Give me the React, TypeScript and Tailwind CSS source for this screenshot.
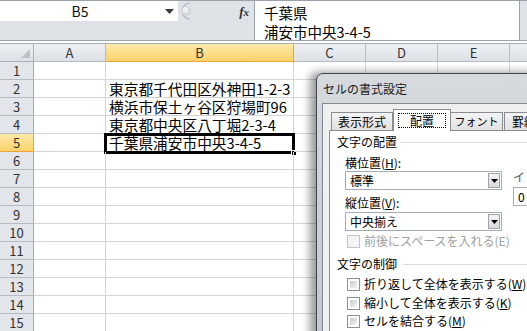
import React from 'react';

const jp = "font-['Noto_Sans_CJK_JP','Noto_Sans',sans-serif]";

const columns = [
    { key: 'A', width: 'w-[72px]' },
    { key: 'B', width: 'w-[188px]' },
    { key: 'C', width: 'w-[72px]' },
    { key: 'D', width: 'w-[72px]' },
    { key: 'E', width: 'w-[72px]' },
    { key: 'F', width: 'w-[72px]' },
];

const cellValues: Record<number, string> = {
    2: '東京都千代田区外神田1-2-3',
    3: '横浜市保土ヶ谷区狩場町96',
    4: '東京都中央区八丁堀2-3-4',
    5: '千葉県浦安市中央3-4-5',
};

const rows = Array.from({ length: 15 }, (_, i) => i + 1);

const Checkbox = ({ disabled }: { disabled?: boolean }) => (
    <span
        className={
            disabled
                ? 'w-[13px] h-[13px] border border-[#c5c5c5] bg-[#f4f4f4]'
                : 'w-[13px] h-[13px] border border-[#8e8f8f] bg-white p-[2px] flex'
        }
    >
        {!disabled && <span className="flex-1 bg-gradient-to-br from-[#c9cbcd] to-[#f2f3f4]"></span>}
    </span>
);

const DropDown = ({ value }: { value: string }) => (
    <div className="w-[157px] h-[19px] border border-[#a5acb5] bg-white flex items-center justify-between pl-[4px] pr-[1px]">
        <span className="text-[12px] leading-none">{value}</span>
        <span className="w-[12px] h-[15px] border border-[#9da3aa] bg-gradient-to-b from-[#f4f4f4] to-[#d9d9d9] flex items-center justify-center">
            <svg width="7" height="4" viewBox="0 0 7 4">
                <path d="M0 0H7L3.5 4Z" fill="#000" />
            </svg>
        </span>
    </div>
);

const FormulaBar = () => (
    <div className="flex h-[41px] border-t border-b border-[#9aa2ab] bg-[#dfe3e8]">
        <div className="w-[254px] flex flex-col">
            <div className="h-[20px] flex">
                <div className="w-[178px] bg-white flex items-center">
                    <span className="w-[160px] text-center text-[14px] leading-none text-[#111]">B5</span>
                    <svg width="9" height="5" viewBox="0 0 9 5" className="ml-[5px]">
                        <path d="M0 0H9L4.5 5Z" fill="#3a3a3a" />
                    </svg>
                </div>
                <div className="flex-1 flex items-center">
                    <svg width="14" height="18" viewBox="0 0 14 18" className="-ml-[1px]">
                        <path d="M13 1A8 8 0 0 0 13 17" fill="none" stroke="#aab0b7" strokeWidth="1.2" />
                        <circle cx="9" cy="9" r="5" fill="#d3d6da" />
                        <circle cx="8.5" cy="8" r="3" fill="#eceef0" />
                    </svg>
                    <span className="ml-auto mr-[5px] font-['Liberation_Serif',serif] italic font-bold text-[13px] text-[#333] leading-none">
                        f<span className="text-[11px]">x</span>
                    </span>
                </div>
            </div>
            <div className="flex-1"></div>
        </div>
        <div className="w-[266px] bg-white border-l border-r border-[#9aa2ab] pl-[9px] pt-[2px] text-[14.5px] leading-[19px] text-black">
            <div>千葉県</div>
            <div>浦安市中央3-4-5</div>
        </div>
        <div className="flex-1"></div>
    </div>
);

const Sheet = () => (
    <div className="flex flex-col">
        <div className="h-[3px] bg-white border-b border-[#a7afb8]"></div>
        <div className="flex h-[18px]">
            <div className="w-[34px] shrink-0 border-r border-b border-[#a9b0b8] bg-gradient-to-b from-[#eef0f3] to-[#dde1e6] flex items-end justify-end pr-[3px] pb-[3px]">
                <svg width="9" height="9" viewBox="0 0 9 9">
                    <path d="M9 0V9H0Z" fill="#bcc2c9" />
                </svg>
            </div>
            {columns.map((col) => (
                <div
                    key={col.key}
                    className={
                        col.key === 'B'
                            ? `${col.width} shrink-0 border-r border-b border-[#f0a33a] bg-gradient-to-b from-[#fde8a6] to-[#f9d36b] flex items-center justify-center text-[13px] text-[#333]`
                            : `${col.width} shrink-0 border-r border-b border-[#b5bbc2] bg-gradient-to-b from-[#eef0f3] to-[#dde1e6] flex items-center justify-center text-[13px] text-[#333]`
                    }
                >
                    {col.key}
                </div>
            ))}
        </div>
        {rows.map((row) => (
            <div key={row} className="flex h-[18px]">
                <div
                    className={
                        row === 5
                            ? 'w-[34px] shrink-0 border-r border-b border-[#f0a33a] bg-gradient-to-b from-[#fde8a6] to-[#f9d36b] flex items-center justify-center text-[13px] text-[#333]'
                            : 'w-[34px] shrink-0 border-r border-b border-[#b5bbc2] border-r-[#a3aab2] bg-[#e2e5ea] flex items-center justify-center text-[13px] text-[#333]'
                    }
                >
                    {row}
                </div>
                {columns.map((col) => (
                    <div
                        key={col.key}
                        className={`${col.width} shrink-0 relative border-r border-b border-[#d4d4d4] pl-[3px] text-[14.7px] leading-[18px] whitespace-nowrap text-black`}
                    >
                        {col.key === 'B' && cellValues[row]}
                        {col.key === 'B' && row === 5 && (
                            <>
                                <div className="absolute -left-[2px] -top-[1px] w-[191px] h-[21px] border-[3px] border-black"></div>
                                <div className="absolute left-[185px] top-[16px] w-[6px] h-[6px] bg-black border border-white"></div>
                            </>
                        )}
                    </div>
                ))}
            </div>
        ))}
    </div>
);

const FormatDialog = () => (
    <div className="absolute left-[316px] top-[73px] w-[240px] h-[290px] rounded-tl-[7px] border border-[#3f4348] bg-gradient-to-b from-[#d6d9dd] to-[#c2c6cb] shadow-[-6px_-1px_9px_rgba(0,0,0,0.4)] flex flex-col">
        <div className="h-[29px] pl-[6px] flex items-center text-[12px] text-[#1a1a1a]">セルの書式設定</div>
        <div className="ml-[5px] flex-1 border-l border-t border-[#83888e] bg-[#f0f0f0] pl-[6px] pt-[5px] flex flex-col">
            <div className="flex items-end h-[21px] pl-[2px] text-[12px] text-black">
                <div className="w-[62px] h-[18px] border border-b-0 border-[#898c95] bg-gradient-to-b from-[#f3f3f3] to-[#e2e2e2] flex items-center justify-center">
                    表示形式
                </div>
                <div className="w-[58px] h-[22px] -mb-[1px] border border-b-0 border-[#898c95] bg-white flex items-center justify-center relative z-10">
                    <span className="w-[48px] h-[15px] border border-dotted border-black flex items-center justify-center">配置</span>
                </div>
                <div className="w-[52px] h-[18px] border border-b-0 border-l-0 border-[#898c95] bg-gradient-to-b from-[#f3f3f3] to-[#e2e2e2] flex items-center justify-center text-[11px]">
                    フォント
                </div>
                <div className="w-[40px] h-[18px] ml-[1px] border border-b-0 border-[#898c95] bg-gradient-to-b from-[#f3f3f3] to-[#e2e2e2] pl-[7px] flex items-center">
                    罫線
                </div>
            </div>
            <div className="flex-1 bg-white border border-[#898c95] pl-[7px] pt-[3px] text-[12px] leading-[16px] text-black">
                <div className="flex items-center">
                    <span>文字の配置</span>
                    <span className="flex-1 h-px ml-[4px] bg-[#d5dfe5]"></span>
                </div>
                <div className="ml-[8px] flex">
                    <div className="flex flex-col">
                        <div className="mt-[5px]">
                            横位置(<span className="underline">H</span>):
                        </div>
                        <DropDown value="標準" />
                        <div className="mt-[5px]">
                            縦位置(<span className="underline">V</span>):
                        </div>
                        <div className="mt-[1px]">
                            <DropDown value="中央揃え" />
                        </div>
                    </div>
                    <div className="ml-[11px] mt-[19px] flex flex-col whitespace-nowrap">
                        <span className="text-[#555]">インデント(I):</span>
                        <span className="mt-[2px] w-[40px] h-[19px] border border-[#abadb3] pl-[4px] flex items-center">0</span>
                    </div>
                </div>
                <div className="ml-[10px] mt-[2px] flex items-center gap-[4px] text-[#a0a0a0]">
                    <Checkbox disabled />
                    <span>前後にスペースを入れる(E)</span>
                </div>
                <div className="mt-[7px] flex items-center">
                    <span>文字の制御</span>
                    <span className="flex-1 h-px ml-[6px] bg-[#d5dfe5]"></span>
                </div>
                <div className="ml-[10px] mt-[4px] flex items-center gap-[4px]">
                    <Checkbox />
                    <span>
                        折り返して全体を表示する(<span className="underline">W</span>)
                    </span>
                </div>
                <div className="ml-[10px] mt-[3px] flex items-center gap-[4px]">
                    <Checkbox />
                    <span>
                        縮小して全体を表示する(<span className="underline">K</span>)
                    </span>
                </div>
                <div className="ml-[10px] mt-[2px] flex items-center gap-[4px]">
                    <Checkbox />
                    <span>
                        セルを結合する(<span className="underline">M</span>)
                    </span>
                </div>
            </div>
        </div>
    </div>
);

const App: React.FC = () => {
    return (
        <div className={`relative w-[527px] h-[331px] overflow-hidden bg-white ${jp}`}>
            <FormulaBar />
            <Sheet />
            <FormatDialog />
        </div>
    );
};

export default App;
